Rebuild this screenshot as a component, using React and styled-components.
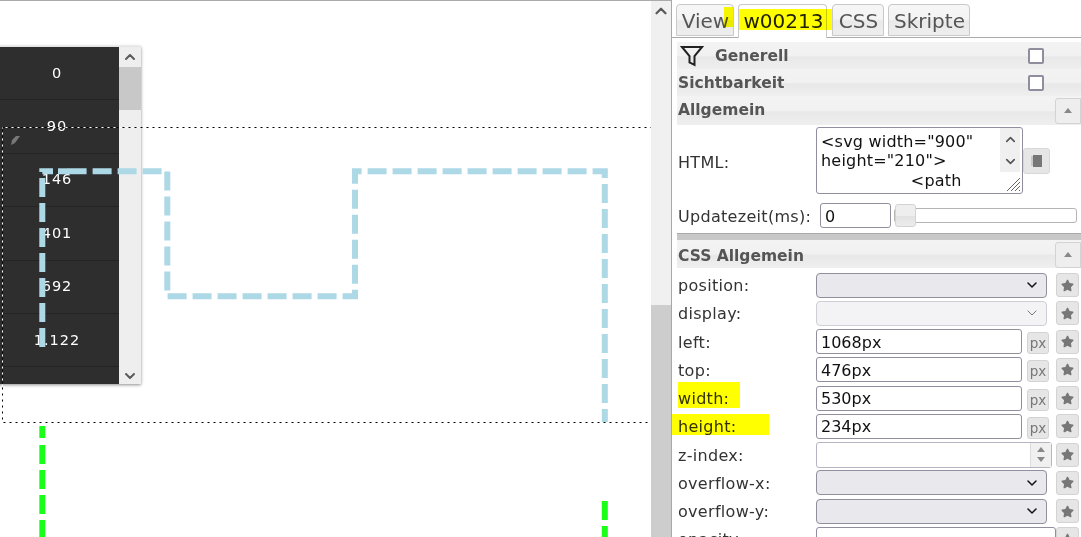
import React from 'react';
import styled, { createGlobalStyle } from 'styled-components';
import { ChevronUp, ChevronDown } from 'lucide-react';
import { FaStar } from 'react-icons/fa';

const Global = createGlobalStyle`
  html, body { margin: 0; padding: 0; height: 537px; overflow: hidden; background: #fff; }
  * { box-sizing: border-box; }
`;

const Page = styled.div`
  display: flex;
  width: 1081px;
  height: 537px;
  overflow: hidden;
  font-family: "DejaVu Sans", Verdana, sans-serif;
`;

/* linke seite: freie arbeitsflaeche */
const Canvas = styled.div`
  position: relative;
  flex: 0 0 651px;
  border-top: 1px solid #aaa;
  overflow: hidden;
`;

const ListWidget = styled.div`
  position: absolute;
  left: -5px;
  top: 45px;
  width: 146px;
  height: 338px;
  display: flex;
  border-top: 1px solid #e4e4e4;
  box-shadow: 0 1px 3px rgba(0,0,0,.45);
`;

const ListRows = styled.div`
  flex: 0 0 124px;
  background: #2e2e2e;
  overflow: hidden;
`;

const ListRow = styled.div`
  height: 53.4px;
  padding-bottom: 1px;
  border-bottom: 1px solid #242424;
  display: flex;
  align-items: center;
  justify-content: center;
  color: #fff;
  font-size: 14.5px;
  letter-spacing: 1px;
`;

const ListScroll = styled.div`
  flex: 1;
  background: #eee;
  display: flex;
  flex-direction: column;
  align-items: stretch;
  color: #5a5a5a;
`;

const ArrowCell = styled.div`
  height: ${({$h}) => $h || 20}px;
  display: flex;
  justify-content: center;
  flex: ${({$grow}) => ($grow ? 1 : 'none')};
  align-items: ${({$end}) => ($end ? 'flex-end' : 'center')};
`;

const ListThumb = styled.div`
  height: 43px;
  background: #c8c8c8;
`;

const Pencil = styled.svg`
  position: absolute;
  left: 10px;
  top: 134px;
`;

const Drawing = styled.svg`
  position: absolute;
  left: 0;
  top: -1px;
`;

const PageScroll = styled.div`
  flex: 0 0 20px;
  display: flex;
  flex-direction: column;
  background: #f0f0f0;
  border-top: 1px solid #aaa;
  color: #5a5a5a;
`;

const PageThumb = styled.div`
  flex: 1;
  margin-top: 284px;
  background: #cdcdcd;
`;

/* rechte seite: eigenschaften */
const Panel = styled.div`
  flex: 1;
  min-width: 0;
  border-left: 1px solid #a8a8a8;
  color: #333;
  position: relative;
  overflow: hidden;
`;

const TabBar = styled.div`
  height: 38px;
  padding: 4px 0 0 4px;
  display: flex;
  border-bottom: 1px solid #aaa;
`;

const Tab = styled.div`
  flex: 0 0 ${({$w}) => $w}px;
  margin-right: ${({$gap}) => $gap || 0}px;
  height: ${({$active}) => ($active ? 34 : 32)}px;
  padding: ${({$active}) => ($active ? '1px 0 0 2px' : '1px 0 0 1px')};
  display: flex;
  align-items: ${({$active}) => ($active ? 'flex-start' : 'center')};
  justify-content: center;
  font-size: 20px;
  line-height: 30px;
  color: ${({$active}) => ($active ? '#222' : '#555')};
  border: 1px solid #c9c9c9;
  border-bottom: ${({$active}) => ($active ? 0 : '1px solid #c9c9c9')};
  border-radius: 4px 4px 0 0;
  background: ${({$active}) => ($active ? '#fff' : 'linear-gradient(#f6f6f6 0, #f4f4f4 45%, #e9e9e9 55%, #eee 100%)')};
`;

const Content = styled.div`
  padding: 4px 0 0 5px;
`;

const Header = styled.div`
  height: ${({$h}) => $h || 27}px;
  display: flex;
  align-items: center;
  font-size: 15.5px;
  font-weight: bold;
  color: #555;
  padding-left: 1px;
  background: linear-gradient(#f3f3f3 0, #f1f1f1 50%, #e8e8e8 55%, #efefef 100%);
`;

const HeaderText = styled.span`
  flex: 1;
  padding-top: ${({$shift}) => $shift || 0}px;
`;

const Funnel = styled.svg`
  margin-left: 2px;
  margin-right: 11px;
  flex: none;
`;

const Check = styled.div`
  width: 16px;
  height: 16px;
  margin-right: 37px;
  background: #fff;
  border: 2px solid #8f8d9e;
  border-radius: 2px;
`;

const Collapse = styled.div`
  width: 26px;
  height: 26px;
  margin-top: 1px;
  background: #eeeeee;
  border: 1px solid #d3d3d3;
  border-radius: 3px 0 0 3px;
  display: flex;
  align-items: center;
  justify-content: center;
`;

const Triangle = styled.div`
  width: 0;
  height: 0;
  border-left: 4px solid transparent;
  border-right: 4px solid transparent;
  ${({$down}) => ($down ? 'border-top: 5px solid #888;' : 'border-bottom: 5px solid #888;')}
`;

const Row = styled.div`
  height: ${({$h}) => $h || 28.25}px;
  display: flex;
  align-items: center;
`;

const Label = styled.div`
  flex: 0 0 ${({$w}) => $w || 139}px;
  font-size: 16px;
  padding: ${({$top}) => $top || 1}px 0 0 1px;
  letter-spacing: .3px;
`;

const Select = styled.div`
  flex: 0 0 231px;
  height: 25px;
  border: 1px solid ${({$off}) => ($off ? '#cfced6' : '#8f8f9d')};
  border-radius: 4px;
  background: ${({$off}) => ($off ? '#f3f3f6' : '#e9e9ed')};
  color: ${({$off}) => ($off ? '#777' : '#111')};
  display: flex;
  align-items: center;
  justify-content: flex-end;
  padding-right: 6px;
`;

const TextInput = styled.input`
  flex: none;
  width: ${({$w}) => $w || 206}px;
  height: 25px;
  padding: 1px 4px 0;
  margin: 0;
  font: 16px "DejaVu Sans", sans-serif;
  color: #111;
  background: #fff;
  border: 1px solid #8f8f9d;
  border-radius: 3px;
  outline: none;
`;

const PxBtn = styled.div`
  flex: none;
  width: 22px;
  height: 22px;
  margin: 3px 0 0 5px;
  background: #e6e6e6;
  border: 1px solid #d3d3d3;
  border-radius: 3px;
  color: #777;
  font-size: 13.5px;
  display: flex;
  align-items: center;
  justify-content: center;
`;

const StarBtn = styled.div`
  flex: none;
  width: 23px;
  height: 24px;
  margin-left: ${({$ml}) => $ml}px;
  background: #e6e6e6;
  border: 1px solid #d3d3d3;
  border-radius: 3px;
  color: #777;
  display: flex;
  align-items: center;
  justify-content: center;
  font-size: 13px;
`;

const Spinner = styled.div`
  flex: 0 0 236px;
  height: 26px;
  border: 1px solid #b5b4c0;
  border-radius: 3px;
  background: #fff;
  display: flex;
  justify-content: flex-end;
`;

const SpinBtns = styled.div`
  width: 21px;
  background: #f0f0f0;
  border-left: 1px solid #ddd;
  display: flex;
  flex-direction: column;
  align-items: center;
  justify-content: space-evenly;
`;

const HtmlRow = styled.div`
  height: 74.5px;
  padding-top: 2.5px;
  display: flex;
  align-items: flex-start;
`;

const TextBox = styled.div`
  flex: 0 0 207px;
  height: 67px;
  position: relative;
  display: flex;
  overflow: hidden;
  border: 1px solid #8f8f9d;
  border-radius: 3px;
  background: #fff;
`;

const Code = styled.div`
  flex: 1;
  min-width: 0;
  padding: 3.5px 0 0 4px;
  font-size: 16px;
  letter-spacing: .2px;
  line-height: 19.6px;
  white-space: pre;
  color: #111;
`;

const CodeScroll = styled.div`
  flex: 0 0 20px;
  margin-right: 2px;
  height: 44px;
  background: #f0f0f0;
  display: flex;
  flex-direction: column;
  align-items: center;
  justify-content: space-around;
  color: #555;
`;

const Grip = styled.svg`
  position: absolute;
  right: 1px;
  bottom: 1px;
`;

const BookBtn = styled.div`
  flex: none;
  width: 27px;
  height: 26px;
  margin-top: 21px;
  background: #e6e6e6;
  border: 1px solid #d8d8d8;
  border-radius: 3px;
  display: flex;
  align-items: center;
  justify-content: center;
`;

const SliderTrack = styled.div`
  flex: 0 0 183px;
  height: 15px;
  margin-left: 3px;
  position: relative;
  background: #fff;
  border: 1px solid #b5b5b5;
  border-radius: 3px;
`;

const SliderHandle = styled.div`
  position: absolute;
  left: 0;
  top: -5px;
  width: 21px;
  height: 23px;
  background: linear-gradient(#eee 0, #eee 50%, #e2e2e2 55%, #ececec 100%);
  border: 1px solid #d3d3d3;
  border-radius: 3px;
`;

const Divider = styled.div`
  height: 7px;
  margin-top: 1px;
  background: #c8c8c8;
  border-top: 1px solid #aaa;
`;

const Spacer = styled.div`
  height: 3px;
`;

/* gelbe textmarker-striche */
const Marker = styled.div`
  position: absolute;
  left: ${({$x}) => $x}px;
  top: ${({$y}) => $y}px;
  width: ${({$w}) => $w}px;
  height: ${({$h}) => $h}px;
  background: #ffff00;
  mix-blend-mode: multiply;
  pointer-events: none;
`;

const numbers = ['0', '90', '146', '401', '692', '1.122', ''];

const cssRows = [
  { label: 'position', type: 'select' },
  { label: 'display', type: 'select', off: true },
  { label: 'left', type: 'px', value: '1068px' },
  { label: 'top', type: 'px', value: '476px' },
  { label: 'width', type: 'px', value: '530px' },
  { label: 'height', type: 'px', value: '234px' },
  { label: 'z-index', type: 'spin' },
  { label: 'overflow-x', type: 'select' },
  { label: 'overflow-y', type: 'select' },
  { label: 'opacity', type: 'plain' },
];

function CssRow({ row }) {
  return (
    <Row>
      <Label>{row.label}:</Label>
      {row.type === 'select' && (
        <>
          <Select $off={row.off}><ChevronDown size={16} strokeWidth={row.off ? 1.5 : 2.2} /></Select>
          <StarBtn $ml={9}><FaStar /></StarBtn>
        </>
      )}
      {row.type === 'px' && (
        <>
          <TextInput readOnly defaultValue={row.value} />
          <PxBtn>px</PxBtn>
          <StarBtn $ml={7}><FaStar /></StarBtn>
        </>
      )}
      {row.type === 'spin' && (
        <>
          <Spinner><SpinBtns><Triangle /><Triangle $down /></SpinBtns></Spinner>
          <StarBtn $ml={4}><FaStar /></StarBtn>
        </>
      )}
      {row.type === 'plain' && (
        <>
          <TextInput readOnly defaultValue="" $w={240} />
          <StarBtn $ml={0}><FaStar /></StarBtn>
        </>
      )}
    </Row>
  );
}

export default function App() {
  return (
    <Page>
      <Global />
      <Canvas>
        <ListWidget>
          <ListRows>
            {numbers.map((n, i) => <ListRow key={i}>{n}</ListRow>)}
          </ListRows>
          <ListScroll>
            <ArrowCell $h={20}><ChevronUp size={16} strokeWidth={3} /></ArrowCell>
            <ListThumb />
            <ArrowCell $grow $end><ChevronDown size={16} strokeWidth={3} /></ArrowCell>
          </ListScroll>
        </ListWidget>
        <Pencil width="12" height="12" viewBox="0 0 12 12">
          <path d="M1 10 L2 5 L6 1 L10 1 L5 8 Z" fill="#777" />
        </Pencil>
        <Drawing width="651" height="537" fill="none">
          {/* auswahlrahmen: schwarze und weisse striche, sichtbar auf hell und dunkel */}
          <rect x="2.5" y="127.5" width="700" height="295" stroke="#000" strokeDasharray="2 4" />
          <rect x="2.5" y="127.5" width="700" height="295" stroke="#fff" strokeDasharray="2 4" strokeDashoffset="3" />
          <g stroke="#add8e6" strokeWidth="6">
            <path d="M42.3 347 V171.3 H53" strokeDasharray="19 6" />
            <path d="M58 171.3 H68" />
            <path d="M67.6 171.3 H167.3 V296.3 H355 V171.3 H604.8 V422" strokeDasharray="19 6" />
          </g>
          <g stroke="#1aff1a" strokeWidth="6">
            <path d="M42.3 426 V438" />
            <path d="M42.3 445 V540" strokeDasharray="19 6" />
            <path d="M604.8 501 V540" strokeDasharray="19 6" />
          </g>
        </Drawing>
      </Canvas>
      <PageScroll>
        <ArrowCell $h={20}><ChevronUp size={18} strokeWidth={3} /></ArrowCell>
        <PageThumb />
      </PageScroll>
      <Panel>
        <TabBar>
          <Tab $w={58} $gap={4}>View</Tab>
          <Tab $w={89} $gap={5} $active>w00213</Tab>
          <Tab $w={52} $gap={4}>CSS</Tab>
          <Tab $w={82}>Skripte</Tab>
        </TabBar>
        <Content>
          <Header>
            <Funnel width="24" height="24" viewBox="0 0 24 24" fill="none" stroke="#222" strokeWidth="2">
              <path d="M2 3 H22 L14.5 12 V21 L9.5 18.5 V12 Z" />
            </Funnel>
            <HeaderText>Generell</HeaderText>
            <Check />
          </Header>
          <Header>
            <HeaderText>Sichtbarkeit</HeaderText>
            <Check />
          </Header>
          <Header $h={28.5}>
            <HeaderText>Allgemein</HeaderText>
            <Collapse><Triangle /></Collapse>
          </Header>
          <HtmlRow>
            <Label $top={26}>HTML:</Label>
            <TextBox>
              <Code>{'<svg width="900"\nheight="210">\n                 <path\n  d="M 40 0 l "'}</Code>
              <CodeScroll><ChevronUp size={15} strokeWidth={2.6} /><ChevronDown size={15} strokeWidth={2.6} /></CodeScroll>
              <Grip width="16" height="16" viewBox="0 0 16 16" stroke="#666" strokeWidth="1">
                <path d="M2 15 L15 2 M6 15 L15 6 M10 15 L15 10 M14 15 L15 14" />
              </Grip>
            </TextBox>
            <BookBtn>
              <svg width="12" height="14" viewBox="0 0 12 14">
                <rect x="2" y="1" width="9" height="12" fill="#777" />
                <path d="M0 3h2M0 5h2M0 7h2M0 9h2M0 11h2" stroke="#aaa" />
              </svg>
            </BookBtn>
          </HtmlRow>
          <Row $h={33}>
            <Label $w={143}>Updatezeit(ms):</Label>
            <TextInput readOnly defaultValue="0" $w={71} />
            <SliderTrack><SliderHandle /></SliderTrack>
          </Row>
          <Divider />
          <Header $h={28}>
            <HeaderText $shift={3}>CSS Allgemein</HeaderText>
            <Collapse><Triangle /></Collapse>
          </Header>
          <Spacer />
          {cssRows.map(r => <CssRow key={r.label} row={r} />)}
        </Content>
        <Marker $x={52} $y={7} $w={9} $h={20} />
        <Marker $x={67} $y={9} $w={93} $h={21} />
        <Marker $x={6} $y={382} $w={62} $h={26} />
        <Marker $x={-2} $y={414} $w={99} $h={21} />
      </Panel>
    </Page>
  );
}
